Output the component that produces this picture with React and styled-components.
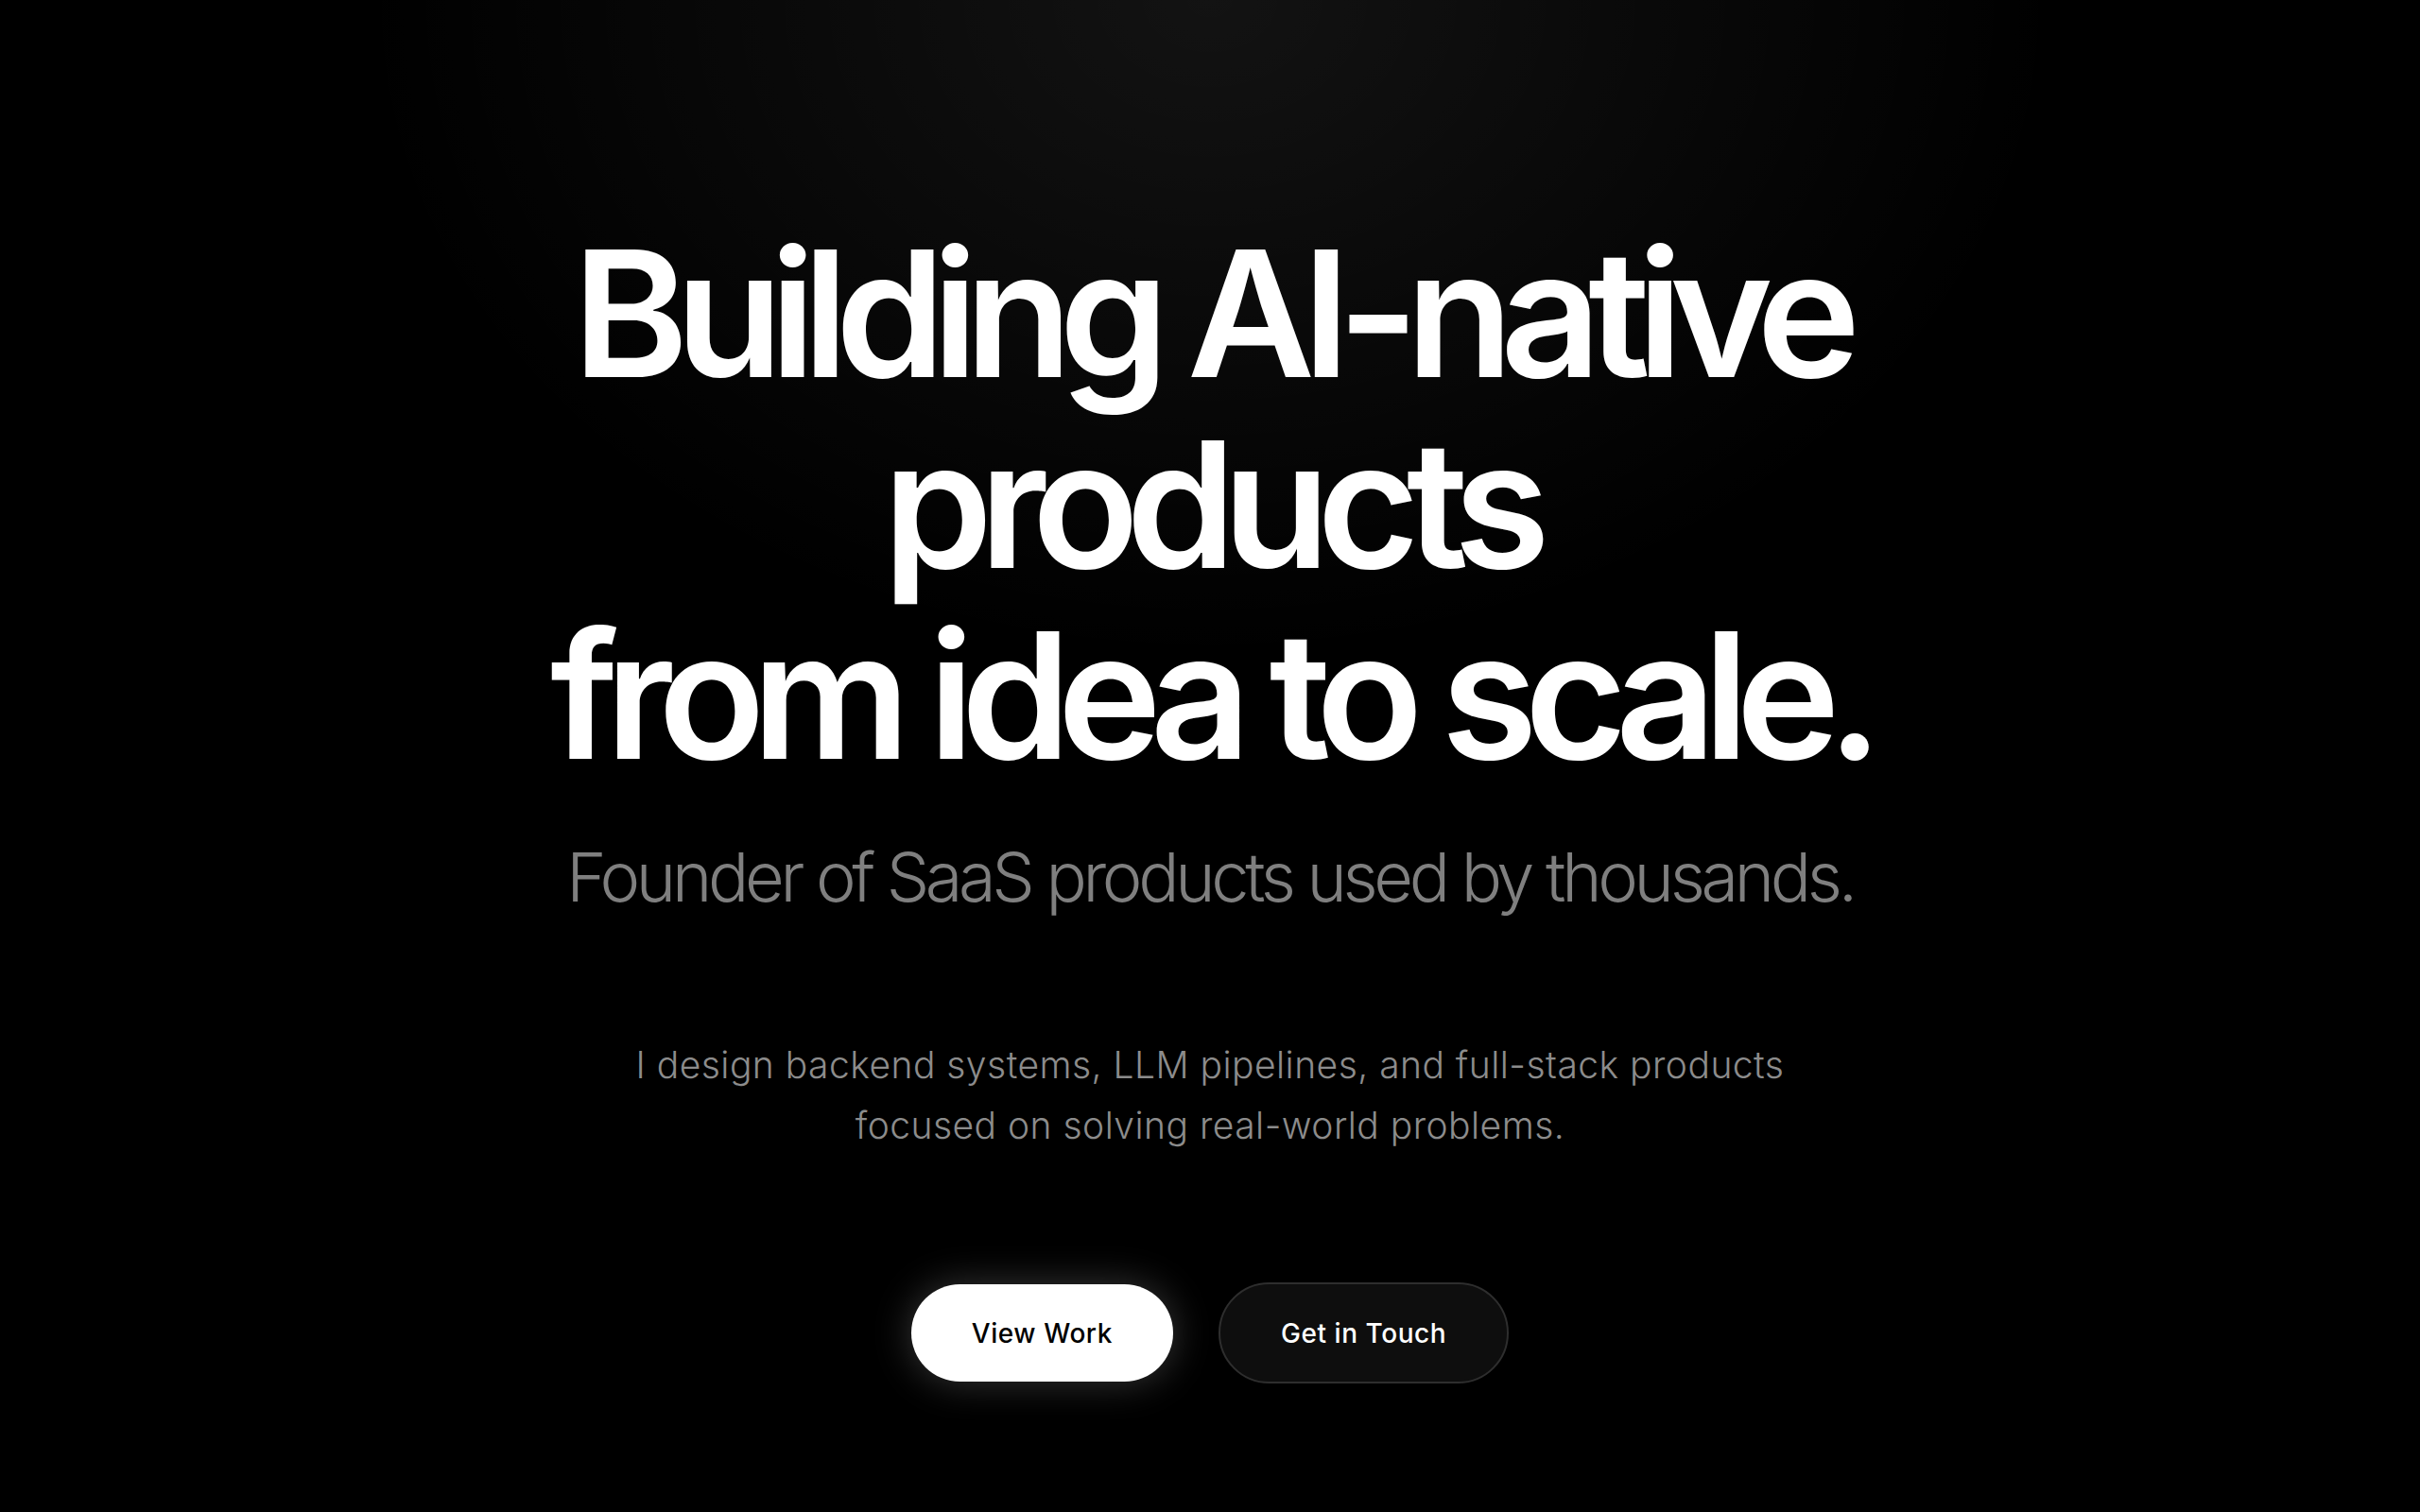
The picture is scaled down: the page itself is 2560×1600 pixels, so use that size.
import React from "react";
import styled, { createGlobalStyle } from "styled-components";

const Global = createGlobalStyle`
  html, body { margin: 0; padding: 0; background: #000; }
  body { font-family: Inter, "Noto Sans", sans-serif; -webkit-font-smoothing: antialiased; }
  * { box-sizing: border-box; }
`;

const Hero = styled.main`
  min-height: 100vh;
  display: flex;
  flex-direction: column;
  align-items: center;
  padding-top: 231px;
  background:
    radial-gradient(ellipse 900px 700px at 50% 0%, rgba(255,255,255,0.075), rgba(255,255,255,0) 100%),
    #000;
  color: #fff;
  text-align: center;
`;

const Title = styled.h1`
  margin: 0;
  font-family: Inter, "Noto Sans", sans-serif;
  font-weight: 600;
  font-size: 186px;
  line-height: 202px;
  letter-spacing: -0.075em;
  color: #fff;
`;

const Line = styled.span`
  display: block;
`;

const Subtitle = styled.p`
  margin: 43px 0 0;
  font-family: Inter, "Noto Sans", sans-serif;
  font-weight: 300;
  font-size: 72px;
  line-height: 96px;
  letter-spacing: -0.06em;
  color: #7f7f7f;
`;

const Lead = styled.p`
  margin: 119px 0 0;
  font-family: Inter, "Noto Sans", sans-serif;
  font-weight: 300;
  font-size: 39px;
  line-height: 64px;
  letter-spacing: 0.012em;
  color: #8c8c8c;
`;

const Actions = styled.div`
  display: flex;
  align-items: center;
  gap: 48px;
  margin-top: 134px;
`;

const Button = styled.a`
  display: inline-flex;
  align-items: center;
  justify-content: center;
  height: ${(p) => (p.$primary ? "103px" : "107px")};
  padding: 0 64px;
  border-radius: 999px;
  font-family: Inter, "Noto Sans", sans-serif;
  font-size: 28px;
  font-weight: 500;
  letter-spacing: 0.02em;
  text-decoration: none;
  background: ${(p) => (p.$primary ? "#fff" : "#0e0e0e")};
  color: ${(p) => (p.$primary ? "#000" : "#fff")};
  border: ${(p) => (p.$primary ? "none" : "2px solid #2e2e2e")};
  box-shadow: ${(p) => (p.$primary ? "0 0 40px rgba(255,255,255,0.22)" : "none")};
`;

export default function App() {
  return (
    <>
      <Global />
      <Hero>
        <Title>
          <Line>Building AI-native</Line>
          <Line>products</Line>
          <Line>from idea to scale.</Line>
        </Title>
        <Subtitle>Founder of SaaS products used by thousands.</Subtitle>
        <Lead>
          I design backend systems, LLM pipelines, and full-stack products
          <br />
          focused on solving real-world problems.
        </Lead>
        <Actions>
          <Button $primary href="#work">View Work</Button>
          <Button href="#contact">Get in Touch</Button>
        </Actions>
      </Hero>
    </>
  );
}
